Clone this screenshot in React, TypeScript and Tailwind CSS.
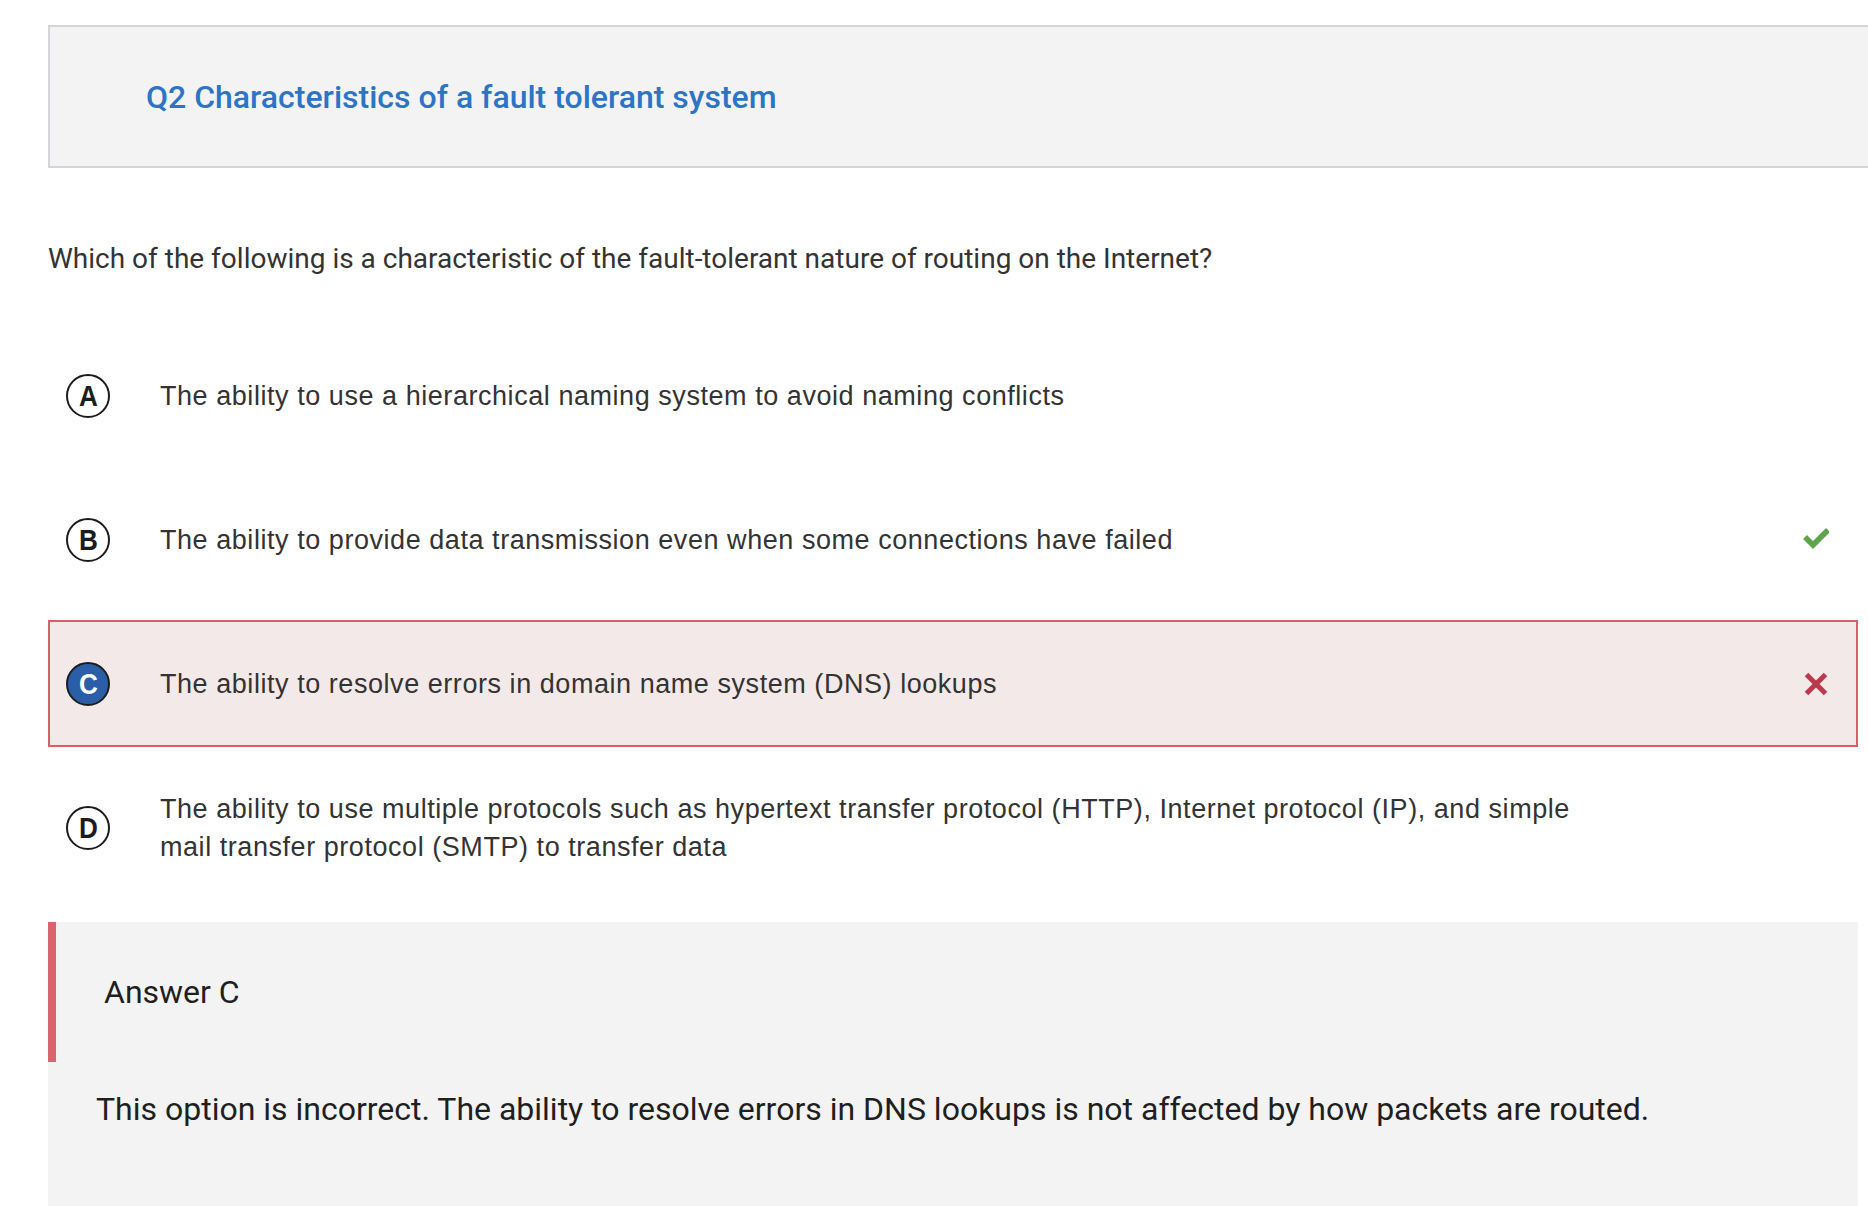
import React from "react";

const roboto = { fontFamily: "Roboto, 'Liberation Sans', sans-serif" };

function Circle({ letter, selected }: { letter: string; selected?: boolean }) {
  return (
    <div
      className={
        "flex h-[44px] w-[44px] shrink-0 items-center justify-center rounded-full border-2 border-[#1c1c1c] text-[29px] font-bold leading-none " +
        (selected ? "bg-[#2a5ea8] text-white" : "bg-white text-[#1c1c1c]")
      }
      style={{ fontFamily: "'Liberation Sans', Arial, sans-serif" }}
    >
      <span className="mt-[1px] inline-block scale-x-90">{letter}</span>
    </div>
  );
}

function Check() {
  return (
    <svg width="26" height="26" viewBox="0 0 26 26">
      <polyline points="2,10 10,18 25,3" fill="none" stroke="#5ea44b" strokeWidth="5.5" />
    </svg>
  );
}

function Cross() {
  return (
    <svg width="26" height="26" viewBox="0 0 26 26">
      <line x1="3.5" y1="3.5" x2="22.5" y2="22.5" stroke="#b93b4b" strokeWidth="5" />
      <line x1="22.5" y1="3.5" x2="3.5" y2="22.5" stroke="#b93b4b" strokeWidth="5" />
    </svg>
  );
}

function Option({
  letter,
  text,
  selected,
  icon,
}: {
  letter: string;
  text: React.ReactNode;
  selected?: boolean;
  icon?: React.ReactNode;
}) {
  return (
    <div
      className={
        "flex h-[127px] items-center border-2 pl-[16px] pr-[27px] " +
        (selected ? "border-[#d65f6a] bg-[#f3e9e9]" : "border-transparent bg-white")
      }
    >
      <Circle letter={letter} selected={selected} />
      <div className="ml-[50px] flex-1">
        <div
          className="max-w-[1460px] text-[27px] leading-[38px] tracking-[0.55px] text-[#333333]"
          style={{ fontFamily: "'Liberation Sans', Arial, sans-serif" }}
        >
          {text}
        </div>
      </div>
      <div className="ml-auto flex w-[26px] shrink-0 items-center justify-center">{icon}</div>
    </div>
  );
}

export default function App() {
  return (
    <div className="min-h-[1206px] w-[1868px] overflow-hidden bg-white pt-[25px]" style={roboto}>
      <div className="ml-[48px] flex h-[143px] items-center border-y-2 border-l-2 border-[#d5d5d9] bg-[#f3f3f3] pl-[96px]">
        <h1 className="text-[32px] font-medium leading-none text-[#2d74c7]" style={roboto}>
          Q2 Characteristics of a fault tolerant system
        </h1>
      </div>

      <p className="ml-[48px] mt-[73px] text-[28px] leading-[36px] text-[#333333]" style={roboto}>
        Which of the following is a characteristic of the fault-tolerant nature of routing on the Internet?
      </p>

      <div className="ml-[48px] mr-[10px] mt-[55px] flex flex-col gap-[17px]">
        <Option letter="A" text="The ability to use a hierarchical naming system to avoid naming conflicts" />
        <Option
          letter="B"
          text="The ability to provide data transmission even when some connections have failed"
          icon={<Check />}
        />
        <Option
          letter="C"
          selected
          text="The ability to resolve errors in domain name system (DNS) lookups"
          icon={<Cross />}
        />
        <Option
          letter="D"
          text="The ability to use multiple protocols such as hypertext transfer protocol (HTTP), Internet protocol (IP), and simple mail transfer protocol (SMTP) to transfer data"
        />
      </div>

      <div className="ml-[48px] mr-[10px] mt-[31px] h-[284px] bg-[#f3f3f3]">
        <div className="flex h-[140px] items-center border-l-8 border-[#d9646e] pl-[48px]">
          <span className="text-[32px] leading-none text-[#1f1f1f]" style={roboto}>
            Answer C
          </span>
        </div>
        <p className="mt-[27px] pl-[48px] text-[32px] leading-[40px] text-[#1f1f1f]" style={roboto}>
          This option is incorrect. The ability to resolve errors in DNS lookups is not affected by how packets are routed.
        </p>
      </div>
    </div>
  );
}
